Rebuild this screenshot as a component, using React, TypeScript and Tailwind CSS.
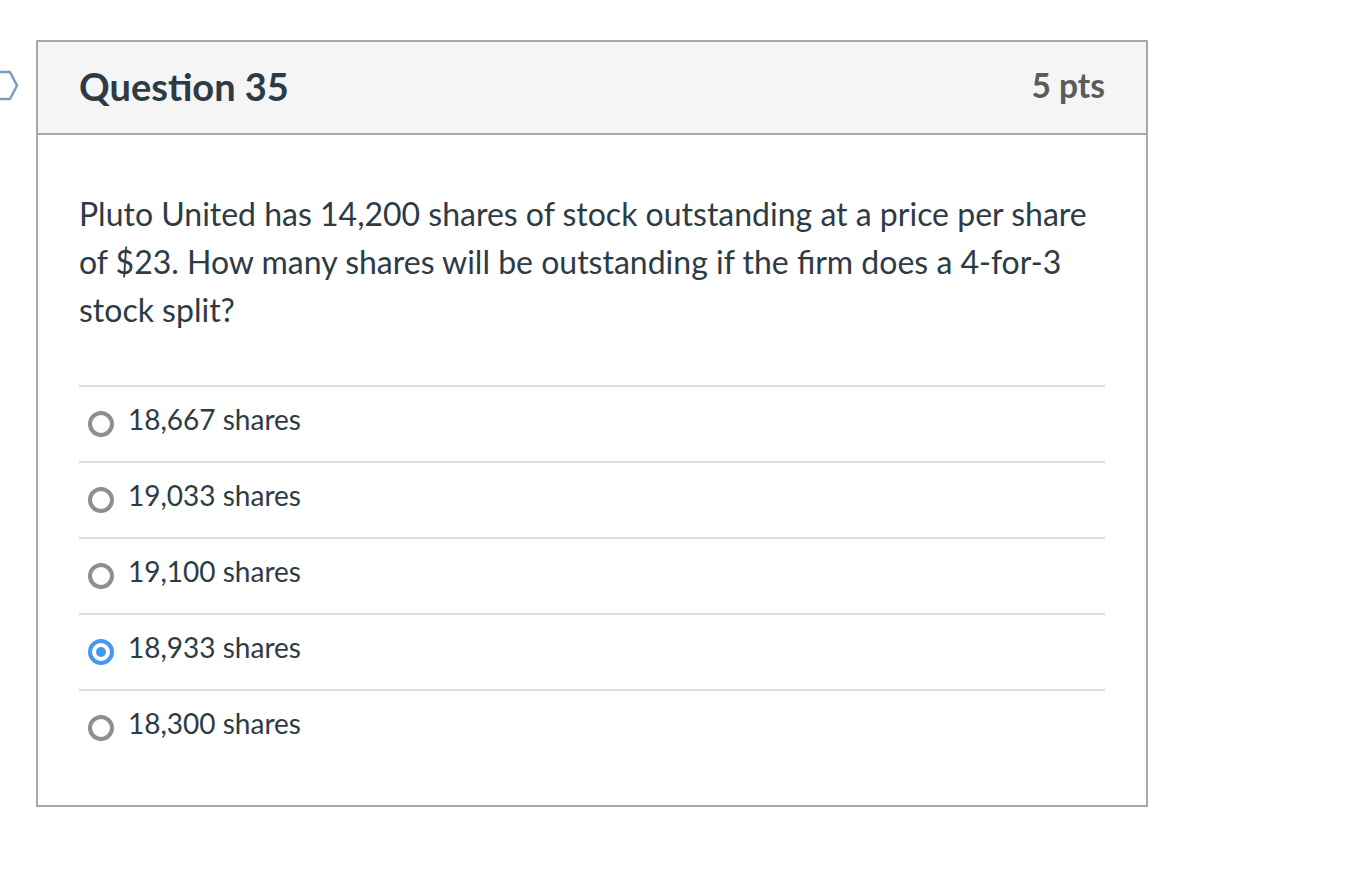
import React from "react";

const options = [
  { label: "18,667 shares", selected: false },
  { label: "19,033 shares", selected: false },
  { label: "19,100 shares", selected: false },
  { label: "18,933 shares", selected: true },
  { label: "18,300 shares", selected: false },
];

function Radio({ selected }: { selected: boolean }) {
  if (selected) {
    return (
      <span className="flex h-[26px] w-[26px] shrink-0 items-center justify-center rounded-full border-[4px] border-[#4597f2] bg-white">
        <span className="h-[10px] w-[10px] rounded-full bg-[#4597f2]" />
      </span>
    );
  }
  return <span className="h-[26px] w-[26px] shrink-0 rounded-full border-[4px] border-[#8e8d95] bg-white" />;
}

export default function App() {
  return (
    <div className="min-h-screen bg-white pl-[36px] pt-[40px]" style={{ fontFamily: "Lato, 'Open Sans', sans-serif" }}>
      <div className="relative w-[1112px] border-2 border-[#a8a8a8]">
        <svg className="absolute left-[-38px] top-[28px]" width="20" height="32" viewBox="0 0 20 32">
          <path d="M-4 2 H10 L17 15.5 L10 29 H-4" fill="none" stroke="#7a9cbd" strokeWidth="2.5" strokeLinejoin="round" />
        </svg>
        <div className="flex h-[93px] items-center justify-between border-b-2 border-[#a8a8a8] bg-[#f5f5f5] px-[41px]">
          <h2 className="mb-[3px] text-[38px] font-bold leading-none text-[#2d3b45]">Question 35</h2>
          <div className="mb-[3px] text-[33.5px] font-bold leading-none text-[#5b5b5b]">5 pts</div>
        </div>
        <div className="px-[41px] pb-[40px] pt-[55px]">
          <p className="text-[32px] leading-[48px] text-[#2d3b45]">
            Pluto United has 14,200 shares of stock outstanding at a price per share of $23. How many shares will be outstanding if the firm does a 4-for-3 stock split?
          </p>
          <div className="mt-[51px]">
            {options.map((o) => (
              <div key={o.label} className="flex h-[76px] items-center gap-[14px] border-t-2 border-[#dddddd] pl-[9px]">
                <Radio selected={o.selected} />
                <span className="mb-[11px] text-[28px] leading-none text-[#2d3b45]">{o.label}</span>
              </div>
            ))}
          </div>
        </div>
      </div>
    </div>
  );
}
